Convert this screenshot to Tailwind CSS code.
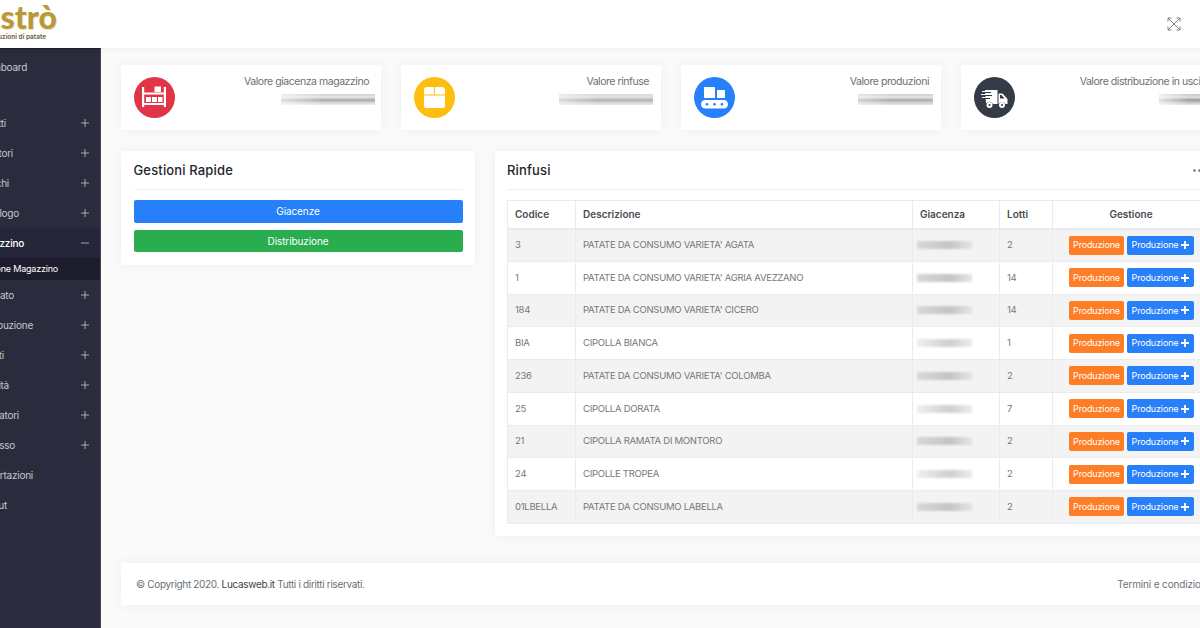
<!DOCTYPE html>
<html lang="it">
<head>
    <meta charset="UTF-8">
    <title>Mastrò - Gestione Magazzino</title>
    <script src="https://cdn.jsdelivr.net/npm/@tailwindcss/browser@4"></script>
</head>
<body class="w-[1200px] h-[628px] overflow-hidden bg-[#fafafa] font-['Inter',sans-serif] text-[#6c6f75]">
    <!-- Top bar -->
    <header class="relative z-10 h-[48px] bg-white shadow-[0_1px_6px_rgba(0,0,0,0.06)] flex items-start justify-between">
        <div class="w-[57px] flex flex-col items-end pt-[1px]">
            <div class="flex justify-end whitespace-nowrap font-['Lato',sans-serif] font-black text-[32px] leading-[32px] text-[#b9983a] [text-shadow:1px_1px_0_#efe6c4]">Mastrò</div>
            <div class="flex justify-end whitespace-nowrap font-semibold text-[6.5px] leading-[8px] text-[#6b5a35] mr-[11px]">Produzioni di patate</div>
        </div>
        <svg class="mt-[17px] mr-[19px] w-[14px] h-[14px] text-[#70747a]" viewBox="0 0 14 14" fill="none" stroke="currentColor" stroke-width="0.9">
            <path d="M1 1l12 12M13 1L1 13M1 4.5V1h3.5M9.5 1H13v3.5M1 9.5V13h3.5M9.5 13H13V9.5"/>
        </svg>
    </header>

    <div class="flex h-[580px]">
        <!-- Sidebar -->
        <aside class="w-[101px] shrink-0 bg-[#2a2b3d] border-r border-r-[#45465a] border-t border-t-[#1c1d2b] overflow-hidden text-[10px] tracking-[-0.25px] text-[#c6c7cf]">
            <div class="pt-[3px]">
                <div class="h-[30px] flex items-center"><div class="w-[27px] flex justify-end whitespace-nowrap">Dashboard</div></div>
                <div class="h-[26px]"></div>
                <div class="h-[30px] flex items-center justify-between pr-[11px]"><div class="w-[6px] flex justify-end whitespace-nowrap">Prodotti</div><svg class="w-[8px] h-[8px]" viewBox="0 0 8 8" stroke="currentColor" stroke-width="0.8"><path d="M4 0v8M0 4h8"/></svg></div>
                <div class="h-[30px] flex items-center justify-between pr-[11px]"><div class="w-[13px] flex justify-end whitespace-nowrap">Fornitori</div><svg class="w-[8px] h-[8px]" viewBox="0 0 8 8" stroke="currentColor" stroke-width="0.8"><path d="M4 0v8M0 4h8"/></svg></div>
                <div class="h-[30px] flex items-center justify-between pr-[11px]"><div class="w-[9px] flex justify-end whitespace-nowrap">Marchi</div><svg class="w-[8px] h-[8px]" viewBox="0 0 8 8" stroke="currentColor" stroke-width="0.8"><path d="M4 0v8M0 4h8"/></svg></div>
                <div class="h-[30px] flex items-center justify-between pr-[11px]"><div class="w-[19px] flex justify-end whitespace-nowrap">Catalogo</div><svg class="w-[8px] h-[8px]" viewBox="0 0 8 8" stroke="currentColor" stroke-width="0.8"><path d="M4 0v8M0 4h8"/></svg></div>
                <div class="h-[30px] flex items-center justify-between pr-[11px] bg-[#25263a] text-white font-medium"><div class="w-[24px] flex justify-end whitespace-nowrap">Magazzino</div><svg class="w-[8px] h-[8px] text-[#c6c7cf]" viewBox="0 0 8 8" stroke="currentColor" stroke-width="0.8"><path d="M0 4h8"/></svg></div>
                <div class="h-[22px] flex items-center bg-[#1d1d2e] text-white text-[9px] tracking-[-0.2px]"><div class="w-[58px] flex justify-end whitespace-nowrap">Gestione Magazzino</div></div>
                <div class="h-[30px] flex items-center justify-between pr-[11px]"><div class="w-[14px] flex justify-end whitespace-nowrap">Mercato</div><svg class="w-[8px] h-[8px]" viewBox="0 0 8 8" stroke="currentColor" stroke-width="0.8"><path d="M4 0v8M0 4h8"/></svg></div>
                <div class="h-[30px] flex items-center justify-between pr-[11px]"><div class="w-[33px] flex justify-end whitespace-nowrap">Distribuzione</div><svg class="w-[8px] h-[8px]" viewBox="0 0 8 8" stroke="currentColor" stroke-width="0.8"><path d="M4 0v8M0 4h8"/></svg></div>
                <div class="h-[30px] flex items-center justify-between pr-[11px]"><div class="w-[4px] flex justify-end whitespace-nowrap">Clienti</div><svg class="w-[8px] h-[8px]" viewBox="0 0 8 8" stroke="currentColor" stroke-width="0.8"><path d="M4 0v8M0 4h8"/></svg></div>
                <div class="h-[30px] flex items-center justify-between pr-[11px]"><div class="w-[9px] flex justify-end whitespace-nowrap">Qualità</div><svg class="w-[8px] h-[8px]" viewBox="0 0 8 8" stroke="currentColor" stroke-width="0.8"><path d="M4 0v8M0 4h8"/></svg></div>
                <div class="h-[30px] flex items-center justify-between pr-[11px]"><div class="w-[19px] flex justify-end whitespace-nowrap">Operatori</div><svg class="w-[8px] h-[8px]" viewBox="0 0 8 8" stroke="currentColor" stroke-width="0.8"><path d="M4 0v8M0 4h8"/></svg></div>
                <div class="h-[30px] flex items-center justify-between pr-[11px]"><div class="w-[15px] flex justify-end whitespace-nowrap">Accesso</div><svg class="w-[8px] h-[8px]" viewBox="0 0 8 8" stroke="currentColor" stroke-width="0.8"><path d="M4 0v8M0 4h8"/></svg></div>
                <div class="h-[30px] flex items-center"><div class="w-[33px] flex justify-end whitespace-nowrap">Esportazioni</div></div>
                <div class="h-[30px] flex items-center"><div class="w-[7px] flex justify-end whitespace-nowrap">Logout</div></div>
            </div>
        </aside>

        <!-- Content -->
        <main class="w-[1100px] shrink-0 pl-[20px] pt-[17px]">
            <!-- Stat cards -->
            <div class="grid grid-cols-[260px_260px_260px_260px] gap-[20px]">
                <div class="h-[65px] bg-white shadow-[0_0_12px_rgba(0,0,0,0.05)] flex justify-between pl-[13px] pr-[12px] pt-[12px]">
                    <svg class="w-[41px] h-[41px]" viewBox="0 0 41 41">
                        <circle cx="20.5" cy="20.5" r="20.5" fill="#e03546"/>
                        <path fill="#fff" d="M8 10h2.200v5.500h19.600V10H32v20h-2.200v-2H10.200v2H8zM10.200 17.500v8.500h19.600v-8.500z"/>
                        <rect x="20.500" y="9.500" width="6.500" height="5.500" fill="#fff"/>
                        <path fill="#fff" d="M12 20h5v5h-5zM18 20h5v5h-5zM24 20h4.500v5H24z"/>
                    </svg>
                    <div class="flex flex-col items-end">
                        <div class="text-[10.5px] tracking-[-0.45px] leading-[12px] mt-[-1px]">Valore giacenza magazzino</div>
                        <div class="w-[94px] h-[11px] mt-[6px] -mr-[6px] bg-[linear-gradient(90deg,rgba(255,255,255,0.6),transparent_45%),linear-gradient(180deg,#d0d0d0,#e6e6e6_30%,#a8a8a8_55%,#d8d8d8_80%,#eee)] blur-[0.6px]"></div>
                    </div>
                </div>
                <div class="h-[65px] bg-white shadow-[0_0_12px_rgba(0,0,0,0.05)] flex justify-between pl-[13px] pr-[12px] pt-[12px]">
                    <svg class="w-[41px] h-[41px]" viewBox="0 0 41 41">
                        <circle cx="20.5" cy="20.5" r="20.5" fill="#fdbe10"/>
                        <path fill="#fff" d="M13 10h7v7.500H10v-4.500a3 3 0 0 1 3-3zM21 10h7a3 3 0 0 1 3 3v4.500H21zM10 18.500h21V29a2 2 0 0 1-2 2H12a2 2 0 0 1-2-2z"/>
                    </svg>
                    <div class="flex flex-col items-end">
                        <div class="text-[10.5px] tracking-[-0.45px] leading-[12px] mt-[-1px]">Valore rinfuse</div>
                        <div class="w-[94px] h-[11px] mt-[6px] -mr-[4px] bg-[linear-gradient(90deg,rgba(255,255,255,0.5),transparent_40%),linear-gradient(180deg,#d8d8d8,#e2e2e2_30%,#b0b0b0_55%,#d8d8d8_80%,#e8e8e8)] blur-[0.6px]"></div>
                    </div>
                </div>
                <div class="h-[65px] bg-white shadow-[0_0_12px_rgba(0,0,0,0.05)] flex justify-between pl-[13px] pr-[12px] pt-[12px]">
                    <svg class="w-[41px] h-[41px]" viewBox="0 0 41 41">
                        <circle cx="20.5" cy="20.5" r="20.5" fill="#2780f9"/>
                        <rect x="10" y="10" width="11" height="11" rx="0.500" fill="#fff"/>
                        <rect x="23" y="13" width="8" height="8" rx="0.500" fill="#fff"/>
                        <rect x="7" y="23" width="27" height="8.500" rx="4.250" fill="#fff"/>
                        <circle cx="13" cy="27.200" r="1.300" fill="#2780f9"/><circle cx="20.500" cy="27.200" r="1.300" fill="#2780f9"/><circle cx="28" cy="27.200" r="1.300" fill="#2780f9"/>
                    </svg>
                    <div class="flex flex-col items-end">
                        <div class="text-[10.5px] tracking-[-0.45px] leading-[12px] mt-[-1px]">Valore produzioni</div>
                        <div class="w-[75px] h-[11px] mt-[6px] -mr-[4px] bg-[linear-gradient(90deg,rgba(255,255,255,0.4),transparent_40%),linear-gradient(180deg,#cfcfcf,#e6e6e6_30%,#aaa_55%,#d4d4d4_80%,#e6e6e6)] blur-[0.6px]"></div>
                    </div>
                </div>
                <div class="h-[65px] bg-white shadow-[0_0_12px_rgba(0,0,0,0.05)] flex justify-between pl-[13px] pr-[12px] pt-[12px]">
                    <svg class="w-[41px] h-[41px]" viewBox="0 0 41 41">
                        <circle cx="20.5" cy="20.5" r="20.500" fill="#343a46"/>
                        <path fill="#fff" d="M11 13h12.500v14H19a4 4 0 0 0-7-.500zM24.500 16.500h4l5 5.500v5h-2a4 4 0 0 0-7 0zM26 18v3.500h4.500l-3-3.500z"/>
                        <path stroke="#343a46" stroke-width="1.200" d="M11 15.500h6M11 18.500h7M11 21.500h5"/>
                        <path stroke="#fff" stroke-width="1.200" d="M8 14.500h5M7 17.500h6M8 20.500h5"/>
                        <circle cx="15.500" cy="28" r="3" fill="#fff"/><circle cx="28" cy="28" r="3" fill="#fff"/>
                        <circle cx="15.500" cy="28" r="1" fill="#343a46"/><circle cx="28" cy="28" r="1" fill="#343a46"/>
                    </svg>
                    <div class="flex flex-col items-end">
                        <div class="text-[10.5px] tracking-[-0.45px] leading-[12px] mt-[-1px] whitespace-nowrap">Valore distribuzione in uscita</div>
                        <div class="w-[50px] h-[11px] mt-[6px] bg-[linear-gradient(90deg,rgba(255,255,255,0.7),transparent_60%),linear-gradient(180deg,#c8c8c8,#dedede_30%,#999_55%,#ccc_80%,#e4e4e4)] blur-[0.6px]"></div>
                    </div>
                </div>
            </div>

            <div class="flex items-start gap-[20px] mt-[21px]">
                <!-- Gestioni Rapide -->
                <section class="w-[354px] shrink-0 h-[114px] bg-white shadow-[0_0_12px_rgba(0,0,0,0.05)] px-[12.500px]">
                    <h2 class="h-[39px] pt-[1px] flex items-center border-b border-[#f0f0f0] text-[13px] font-medium tracking-[0.15px] text-[#23262b]">Gestioni Rapide</h2>
                    <div class="mt-[10px] h-[23px] rounded-[2px] bg-[#2780f9] text-white text-[10px] tracking-[-0.1px] flex items-center justify-center">Giacenze</div>
                    <div class="mt-[7px] h-[22px] rounded-[2px] bg-[#2aad4f] text-white text-[10px] tracking-[-0.1px] flex items-center justify-center">Distribuzione</div>
                </section>

                <!-- Rinfusi -->
                <section class="w-[727px] shrink-0 h-[385px] bg-white shadow-[0_0_12px_rgba(0,0,0,0.05)] px-[12px]">
                    <div class="h-[39px] pt-[1px] flex items-center justify-between border-b border-[#f0f0f0]">
                        <h2 class="text-[13px] font-medium tracking-[0.15px] text-[#23262b]">Rinfusi</h2>
                        <div class="flex gap-[2px] mr-[4px]"><span class="w-[3px] h-[3px] rounded-full bg-[#8a8d92]"></span><span class="w-[3px] h-[3px] rounded-full bg-[#8a8d92]"></span><span class="w-[3px] h-[3px] rounded-full bg-[#8a8d92]"></span></div>
                    </div>
                    <table class="mt-[10px] w-[703px] table-fixed border-collapse text-[9.500px] tracking-[-0.27px] text-[#74777c]">
                        <thead>
                            <tr class="h-[28px] text-[10px] text-[#4a4d52] text-left">
                                <th class="w-[68px] border border-[#ebebeb] border-b-[2px] pl-[7px] font-semibold tracking-[0px]">Codice</th>
                                <th class="w-[337px] border border-[#ebebeb] border-b-[2px] pl-[7px] font-semibold tracking-[0px]">Descrizione</th>
                                <th class="w-[87px] border border-[#ebebeb] border-b-[2px] pl-[7px] font-semibold tracking-[0px]">Giacenza</th>
                                <th class="w-[53px] border border-[#ebebeb] border-b-[2px] pl-[7px] font-semibold tracking-[0px]">Lotti</th>
                                <th class="border border-[#ebebeb] border-b-[2px] text-center font-semibold tracking-[0px]">Gestione</th>
                            </tr>
                        </thead>
                        <tbody>
                            <tr class="h-[32.750px] bg-[#f3f3f3]">
                                <td class="border border-[#ebebeb] pl-[7px]">3</td>
                                <td class="border border-[#ebebeb] pl-[7px]">PATATE DA CONSUMO VARIETA' AGATA</td>
                                <td class="border border-[#ebebeb] pl-[4px]"><div class="w-[55px] h-[8px] bg-[linear-gradient(90deg,#d8d8d8,#c4c4c4_60%,#e6e6e6)] blur-[1px]"></div></td>
                                <td class="border border-[#ebebeb] pl-[7px]">2</td>
                                <td class="border border-[#ebebeb]"><div class="flex gap-[3px] pl-[16px] text-white text-[9px] tracking-[-0.15px]"><span class="w-[55px] h-[19px] rounded-[2px] bg-[#fd7e27] flex items-center justify-center">Produzione</span><span class="w-[67px] h-[19px] rounded-[2px] bg-[#2780f9] flex items-center justify-center gap-[3px]">Produzione<svg class="w-[8px] h-[8px]" viewBox="0 0 8 8" stroke="currentColor" stroke-width="1.800"><path d="M4 0v8M0 4h8"/></svg></span></div></td>
                            </tr>
                            <tr class="h-[32.750px] bg-white">
                                <td class="border border-[#ebebeb] pl-[7px]">1</td>
                                <td class="border border-[#ebebeb] pl-[7px]">PATATE DA CONSUMO VARIETA' AGRIA AVEZZANO</td>
                                <td class="border border-[#ebebeb] pl-[4px]"><div class="w-[55px] h-[8px] bg-[linear-gradient(90deg,#d8d8d8,#c4c4c4_60%,#e6e6e6)] blur-[1px]"></div></td>
                                <td class="border border-[#ebebeb] pl-[7px]">14</td>
                                <td class="border border-[#ebebeb]"><div class="flex gap-[3px] pl-[16px] text-white text-[9px] tracking-[-0.15px]"><span class="w-[55px] h-[19px] rounded-[2px] bg-[#fd7e27] flex items-center justify-center">Produzione</span><span class="w-[67px] h-[19px] rounded-[2px] bg-[#2780f9] flex items-center justify-center gap-[3px]">Produzione<svg class="w-[8px] h-[8px]" viewBox="0 0 8 8" stroke="currentColor" stroke-width="1.800"><path d="M4 0v8M0 4h8"/></svg></span></div></td>
                            </tr>
                            <tr class="h-[32.750px] bg-[#f3f3f3]">
                                <td class="border border-[#ebebeb] pl-[7px]">184</td>
                                <td class="border border-[#ebebeb] pl-[7px]">PATATE DA CONSUMO VARIETA' CICERO</td>
                                <td class="border border-[#ebebeb] pl-[4px]"><div class="w-[55px] h-[8px] bg-[linear-gradient(90deg,#d8d8d8,#c4c4c4_60%,#e6e6e6)] blur-[1px]"></div></td>
                                <td class="border border-[#ebebeb] pl-[7px]">14</td>
                                <td class="border border-[#ebebeb]"><div class="flex gap-[3px] pl-[16px] text-white text-[9px] tracking-[-0.15px]"><span class="w-[55px] h-[19px] rounded-[2px] bg-[#fd7e27] flex items-center justify-center">Produzione</span><span class="w-[67px] h-[19px] rounded-[2px] bg-[#2780f9] flex items-center justify-center gap-[3px]">Produzione<svg class="w-[8px] h-[8px]" viewBox="0 0 8 8" stroke="currentColor" stroke-width="1.800"><path d="M4 0v8M0 4h8"/></svg></span></div></td>
                            </tr>
                            <tr class="h-[32.750px] bg-white">
                                <td class="border border-[#ebebeb] pl-[7px]">BIA</td>
                                <td class="border border-[#ebebeb] pl-[7px]">CIPOLLA BIANCA</td>
                                <td class="border border-[#ebebeb] pl-[4px]"><div class="w-[55px] h-[8px] bg-[linear-gradient(90deg,#f0f0f0,#cfcfcf_60%,#ececec)] blur-[1px]"></div></td>
                                <td class="border border-[#ebebeb] pl-[7px]">1</td>
                                <td class="border border-[#ebebeb]"><div class="flex gap-[3px] pl-[16px] text-white text-[9px] tracking-[-0.15px]"><span class="w-[55px] h-[19px] rounded-[2px] bg-[#fd7e27] flex items-center justify-center">Produzione</span><span class="w-[67px] h-[19px] rounded-[2px] bg-[#2780f9] flex items-center justify-center gap-[3px]">Produzione<svg class="w-[8px] h-[8px]" viewBox="0 0 8 8" stroke="currentColor" stroke-width="1.800"><path d="M4 0v8M0 4h8"/></svg></span></div></td>
                            </tr>
                            <tr class="h-[32.750px] bg-[#f3f3f3]">
                                <td class="border border-[#ebebeb] pl-[7px]">236</td>
                                <td class="border border-[#ebebeb] pl-[7px]">PATATE DA CONSUMO VARIETA' COLOMBA</td>
                                <td class="border border-[#ebebeb] pl-[4px]"><div class="w-[55px] h-[8px] bg-[linear-gradient(90deg,#d8d8d8,#c4c4c4_60%,#e6e6e6)] blur-[1px]"></div></td>
                                <td class="border border-[#ebebeb] pl-[7px]">2</td>
                                <td class="border border-[#ebebeb]"><div class="flex gap-[3px] pl-[16px] text-white text-[9px] tracking-[-0.15px]"><span class="w-[55px] h-[19px] rounded-[2px] bg-[#fd7e27] flex items-center justify-center">Produzione</span><span class="w-[67px] h-[19px] rounded-[2px] bg-[#2780f9] flex items-center justify-center gap-[3px]">Produzione<svg class="w-[8px] h-[8px]" viewBox="0 0 8 8" stroke="currentColor" stroke-width="1.800"><path d="M4 0v8M0 4h8"/></svg></span></div></td>
                            </tr>
                            <tr class="h-[32.750px] bg-white">
                                <td class="border border-[#ebebeb] pl-[7px]">25</td>
                                <td class="border border-[#ebebeb] pl-[7px]">CIPOLLA DORATA</td>
                                <td class="border border-[#ebebeb] pl-[4px]"><div class="w-[55px] h-[8px] bg-[linear-gradient(90deg,#f0f0f0,#cfcfcf_60%,#ececec)] blur-[1px]"></div></td>
                                <td class="border border-[#ebebeb] pl-[7px]">7</td>
                                <td class="border border-[#ebebeb]"><div class="flex gap-[3px] pl-[16px] text-white text-[9px] tracking-[-0.15px]"><span class="w-[55px] h-[19px] rounded-[2px] bg-[#fd7e27] flex items-center justify-center">Produzione</span><span class="w-[67px] h-[19px] rounded-[2px] bg-[#2780f9] flex items-center justify-center gap-[3px]">Produzione<svg class="w-[8px] h-[8px]" viewBox="0 0 8 8" stroke="currentColor" stroke-width="1.800"><path d="M4 0v8M0 4h8"/></svg></span></div></td>
                            </tr>
                            <tr class="h-[32.750px] bg-[#f3f3f3]">
                                <td class="border border-[#ebebeb] pl-[7px]">21</td>
                                <td class="border border-[#ebebeb] pl-[7px]">CIPOLLA RAMATA DI MONTORO</td>
                                <td class="border border-[#ebebeb] pl-[4px]"><div class="w-[55px] h-[8px] bg-[linear-gradient(90deg,#d8d8d8,#c4c4c4_60%,#e6e6e6)] blur-[1px]"></div></td>
                                <td class="border border-[#ebebeb] pl-[7px]">2</td>
                                <td class="border border-[#ebebeb]"><div class="flex gap-[3px] pl-[16px] text-white text-[9px] tracking-[-0.15px]"><span class="w-[55px] h-[19px] rounded-[2px] bg-[#fd7e27] flex items-center justify-center">Produzione</span><span class="w-[67px] h-[19px] rounded-[2px] bg-[#2780f9] flex items-center justify-center gap-[3px]">Produzione<svg class="w-[8px] h-[8px]" viewBox="0 0 8 8" stroke="currentColor" stroke-width="1.800"><path d="M4 0v8M0 4h8"/></svg></span></div></td>
                            </tr>
                            <tr class="h-[32.750px] bg-white">
                                <td class="border border-[#ebebeb] pl-[7px]">24</td>
                                <td class="border border-[#ebebeb] pl-[7px]">CIPOLLE TROPEA</td>
                                <td class="border border-[#ebebeb] pl-[4px]"><div class="w-[55px] h-[8px] bg-[linear-gradient(90deg,#f0f0f0,#cfcfcf_60%,#ececec)] blur-[1px]"></div></td>
                                <td class="border border-[#ebebeb] pl-[7px]">2</td>
                                <td class="border border-[#ebebeb]"><div class="flex gap-[3px] pl-[16px] text-white text-[9px] tracking-[-0.15px]"><span class="w-[55px] h-[19px] rounded-[2px] bg-[#fd7e27] flex items-center justify-center">Produzione</span><span class="w-[67px] h-[19px] rounded-[2px] bg-[#2780f9] flex items-center justify-center gap-[3px]">Produzione<svg class="w-[8px] h-[8px]" viewBox="0 0 8 8" stroke="currentColor" stroke-width="1.800"><path d="M4 0v8M0 4h8"/></svg></span></div></td>
                            </tr>
                            <tr class="h-[32.750px] bg-[#f3f3f3]">
                                <td class="border border-[#ebebeb] pl-[7px]">01LBELLA</td>
                                <td class="border border-[#ebebeb] pl-[7px]">PATATE DA CONSUMO LABELLA</td>
                                <td class="border border-[#ebebeb] pl-[4px]"><div class="w-[55px] h-[8px] bg-[linear-gradient(90deg,#d8d8d8,#c4c4c4_60%,#e6e6e6)] blur-[1px]"></div></td>
                                <td class="border border-[#ebebeb] pl-[7px]">2</td>
                                <td class="border border-[#ebebeb]"><div class="flex gap-[3px] pl-[16px] text-white text-[9px] tracking-[-0.15px]"><span class="w-[55px] h-[19px] rounded-[2px] bg-[#fd7e27] flex items-center justify-center">Produzione</span><span class="w-[67px] h-[19px] rounded-[2px] bg-[#2780f9] flex items-center justify-center gap-[3px]">Produzione<svg class="w-[8px] h-[8px]" viewBox="0 0 8 8" stroke="currentColor" stroke-width="1.800"><path d="M4 0v8M0 4h8"/></svg></span></div></td>
                            </tr>
                        </tbody>
                    </table>
                </section>
            </div>

            <!-- Footer -->
            <footer class="mt-[27px] w-[1100px] h-[42px] bg-white shadow-[0_0_12px_rgba(0,0,0,0.05)] flex items-center justify-between pl-[15px] pr-[12px] text-[10px] tracking-[-0.33px]">
                <div>© Copyright 2020. <span class="text-[#3f4247]">Lucasweb.it</span> Tutti i diritti riservati.</div>
                <div class="whitespace-nowrap tracking-[-0.15px]">Termini e condizioni</div>
            </footer>
        </main>
    </div>
</body>
</html>
